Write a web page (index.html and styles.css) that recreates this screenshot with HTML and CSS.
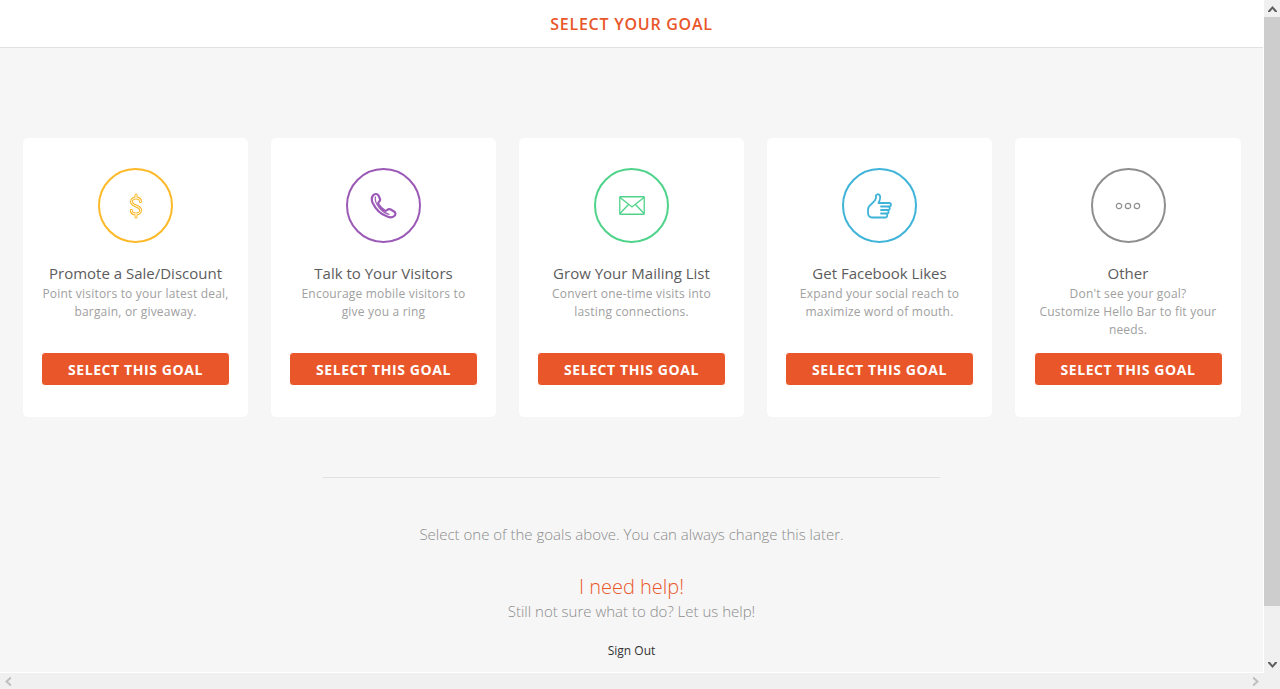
FILE: index.html
```html
<!DOCTYPE html>
<html lang="en">
<head>
    <meta charset="UTF-8">
    <meta name="viewport" content="width=device-width, initial-scale=1.0">
    <title>Select Your Goal</title>
    <link rel="stylesheet" href="styles.css">
</head>
<body>
    <div class="window">
        <div class="page">
            <header class="top-bar">SELECT YOUR GOAL</header>

            <div class="goals">
                <div class="goal">
                    <div class="goal-icon yellow">
                        <svg width="18" height="26" viewBox="0 0 18 26" fill="none">
                            <path class="outer" d="M13.5 8.5C13.5 6 11.5 5 9 5S4.5 6.5 4.5 8.7 6.5 12 9 13s4.7 2 4.7 4.3S11.5 21 9 21s-4.7-1.2-4.7-3.7M9 2v3M9 21v3"/>
                            <path class="inner" d="M13.5 8.5C13.5 6 11.5 5 9 5S4.5 6.5 4.5 8.7 6.5 12 9 13s4.7 2 4.7 4.3S11.5 21 9 21s-4.7-1.2-4.7-3.7M9 2v3M9 21v3"/>
                        </svg>
                    </div>
                    <h3>Promote a Sale/Discount</h3>
                    <p>Point visitors to your latest deal, bargain, or giveaway.</p>
                    <button>SELECT THIS GOAL</button>
                </div>
                <div class="goal">
                    <div class="goal-icon purple">
                        <svg width="28" height="27" viewBox="0 0 28 27" fill="none">
                            <path class="handset" d="M3 3.5C4.5 1.5 7.5 1.5 8.5 3.5L10 7c.4 1-.2 2-1 2.800-.8.800-1 1.700-.4 2.700 1.500 2.500 3.500 4.500 6 6 1 .6 1.800.3 2.600-.5.900-.9 2-1.200 3-.7l3.900 2.200c1.700 1 1.700 3.200.2 4.500-1.700 1.500-4.300 1.700-7 .5C10.500 22.300 5.500 17 2.500 10.500 1.500 8 1.500 5.500 3 3.500Z"/>
                            <path class="handset-line" d="M5.500 4.500C4.500 8 6 11.500 9 15.500c3 3.500 6.500 6 10.500 7"/>
                        </svg>
                    </div>
                    <h3>Talk to Your Visitors</h3>
                    <p>Encourage mobile visitors to give you a ring</p>
                    <button>SELECT THIS GOAL</button>
                </div>
                <div class="goal">
                    <div class="goal-icon green">
                        <svg width="26" height="19" viewBox="0 0 26 19" fill="none">
                            <rect class="thin" x="0.750" y="0.750" width="24.500" height="17.500" rx="0.500"/>
                            <path class="thin" d="M1 1.500 13 11 25 1.500M1 17.500l8.500-9M25 17.500l-8.500-9"/>
                        </svg>
                    </div>
                    <h3>Grow Your Mailing List</h3>
                    <p>Convert one-time visits into lasting connections.</p>
                    <button>SELECT THIS GOAL</button>
                </div>
                <div class="goal">
                    <div class="goal-icon blue">
                        <svg width="25" height="26" viewBox="0 0 25 26" fill="none">
                            <path class="thumb" d="M9 24.500H5C2.500 24.500 1 22.500 1 19.500v-3C1 13.500 3 12 5 10.500 7 9 8.500 7.500 9 5V2.500C9 1.300 11.800.5 12.800 2.500c.9 1.800.2 4.500-1.300 7.500h10.700c2.300 0 2.300 3.500 0 3.500h-1c2 0 2 3.500 0 3.500h-1c1.800 0 1.800 3.500 0 3.500h-1c1.500 0 1.500 4-.7 4Z"/>
                            <path class="thumb" d="M14 13.500h7M14 17h6M14 20.500h5"/>
                        </svg>
                    </div>
                    <h3>Get Facebook Likes</h3>
                    <p>Expand your social reach to maximize word of mouth.</p>
                    <button>SELECT THIS GOAL</button>
                </div>
                <div class="goal">
                    <div class="goal-icon gray">
                        <svg width="26" height="8" viewBox="0 0 26 8" fill="none">
                            <circle class="dot" cx="4" cy="4" r="2.700"/>
                            <circle class="dot" cx="13" cy="4" r="2.700"/>
                            <circle class="dot" cx="22" cy="4" r="2.700"/>
                        </svg>
                    </div>
                    <h3>Other</h3>
                    <p>Don't see your goal?<br>Customize Hello Bar to fit your needs.</p>
                    <button>SELECT THIS GOAL</button>
                </div>
            </div>

            <div class="divider"></div>

            <p class="hint">Select one of the goals above. You can always change this later.</p>
            <a class="help-link" href="#">I need help!</a>
            <p class="help-text">Still not sure what to do? Let us help!</p>
            <a class="sign-out" href="#">Sign Out</a>
        </div>

        <div class="scroll-v">
            <div class="arrow">
                <svg width="9" height="6" viewBox="0 0 9 6"><path d="M0 5 4.500 0 9 5v1H7L4.500 3 2 6H0Z"/></svg>
            </div>
            <div class="thumb-v"></div>
            <div class="arrow arrow-end">
                <svg width="9" height="6" viewBox="0 0 9 6"><path d="M0 1 4.500 6 9 1V0H7L4.500 3 2 0H0Z"/></svg>
            </div>
        </div>
        <div class="scroll-h">
            <svg class="faint" width="6" height="9" viewBox="0 0 6 9"><path d="M5 0 0 4.500 5 9h1V7L3 4.500 6 2V0Z"/></svg>
            <svg class="faint" width="6" height="9" viewBox="0 0 6 9"><path d="M1 0 6 4.500 1 9H0V7L3 4.500 0 2V0Z"/></svg>
        </div>
        <div class="scroll-corner"></div>
    </div>
</body>
</html>
```

FILE: styles.css
```css
html, body {
    margin: 0;
    height: 100%;
    overflow: hidden;
}
body {
    font-family: "Open Sans", sans-serif;
    background-color: #f6f6f6;
}
.window {
    display: grid;
    grid-template-columns: 1fr 16px;
    grid-template-rows: 1fr 16px;
    height: 100vh;
}
.page {
    display: flex;
    flex-direction: column;
    align-items: center;
    overflow: hidden;
    background-color: #f6f6f6;
    border-right: 1px solid #fff;
    border-bottom: 1px solid #fff;
}
.top-bar {
    align-self: stretch;
    height: 47px;
    line-height: 48px;
    text-align: center;
    font-size: 16px;
    font-weight: 600;
    letter-spacing: 0.75px;
    color: #e95629;
    background-color: #fff;
    border-bottom: 1px solid #e1e1e1;
    flex-shrink: 0;
}
.goals {
    display: grid;
    grid-template-columns: repeat(4, 225px) 226px;
    gap: 23px;
    align-self: stretch;
    margin: 90px 22px 0 23px;
}
.goal {
    display: flex;
    flex-direction: column;
    align-items: center;
    height: 279px;
    box-sizing: border-box;
    padding: 30px 18px 0;
    background-color: #fff;
    border-radius: 5px;
    text-align: center;
}
.goal-icon {
    display: flex;
    align-items: center;
    justify-content: center;
    width: 75px;
    height: 75px;
    box-sizing: border-box;
    border: 2px solid currentColor;
    border-radius: 50%;
    flex-shrink: 0;
}
.yellow { color: #fdb927; }
.purple { color: #9b59b6; }
.green { color: #4fd38a; }
.blue { color: #3fb4d8; }
.gray { color: #8e8e8e; }
.goal-icon svg {
    display: block;
}
.outer {
    stroke: currentColor;
    stroke-width: 3;
    stroke-linecap: round;
}
.inner {
    stroke: #fff;
    stroke-width: 1;
    stroke-linecap: round;
}
.handset {
    stroke: currentColor;
    stroke-width: 2.200;
    stroke-linejoin: round;
}
.handset-line {
    stroke: currentColor;
    stroke-width: 1.200;
}
.thin {
    stroke: currentColor;
    stroke-width: 1.300;
}
.thumb {
    stroke: currentColor;
    stroke-width: 1.800;
    stroke-linejoin: round;
    stroke-linecap: round;
}
.dot {
    stroke: currentColor;
    stroke-width: 1.200;
}
.goal h3 {
    margin: 19px 0 0;
    font-size: 15px;
    font-weight: 500;
    line-height: 22px;
    color: #5c5c5c;
}
.goal p {
    margin: 1px 0 0;
    height: 54px;
    font-size: 12px;
    line-height: 18px;
    letter-spacing: 0.2px;
    color: #a0a0a0;
}
.goal button {
    width: 189px;
    height: 34px;
    margin-top: 13px;
    padding: 0;
    font-family: inherit;
    font-size: 14px;
    font-weight: 700;
    letter-spacing: 0.6px;
    color: #fff;
    background-color: #e95629;
    border: 1px solid #fff;
    border-radius: 4px;
    flex-shrink: 0;
}
.divider {
    width: 617px;
    height: 1px;
    margin-top: 60px;
    background-color: #e1e1e1;
    flex-shrink: 0;
}
.hint {
    margin: 46px 0 0;
    font-size: 15px;
    font-weight: 300;
    line-height: 20px;
    color: #8c8c8c;
}
.help-link {
    margin-top: 30px;
    font-size: 20px;
    font-weight: 300;
    line-height: 26px;
    color: #e95629;
    text-decoration: none;
}
.help-text {
    margin: -1px 0 0;
    font-size: 15px;
    font-weight: 300;
    line-height: 24px;
    color: #8c8c8c;
}
.sign-out {
    margin-top: 19px;
    font-size: 12px;
    line-height: 18px;
    color: #333;
    text-decoration: none;
}
.scroll-v {
    display: flex;
    flex-direction: column;
    background-color: #f0f0f0;
}
.arrow {
    display: flex;
    align-items: center;
    justify-content: center;
    height: 17px;
    flex-shrink: 0;
    fill: #606060;
}
.arrow-end {
    margin-top: auto;
}
.thumb-v {
    height: 589px;
    background-color: #cdcdcd;
}
.scroll-h {
    display: flex;
    align-items: center;
    justify-content: space-between;
    padding: 0 5px;
    background-color: #f0f0f0;
}
.faint {
    fill: #c0c0c0;
}
.scroll-corner {
    background-color: #f0f0f0;
}
```
